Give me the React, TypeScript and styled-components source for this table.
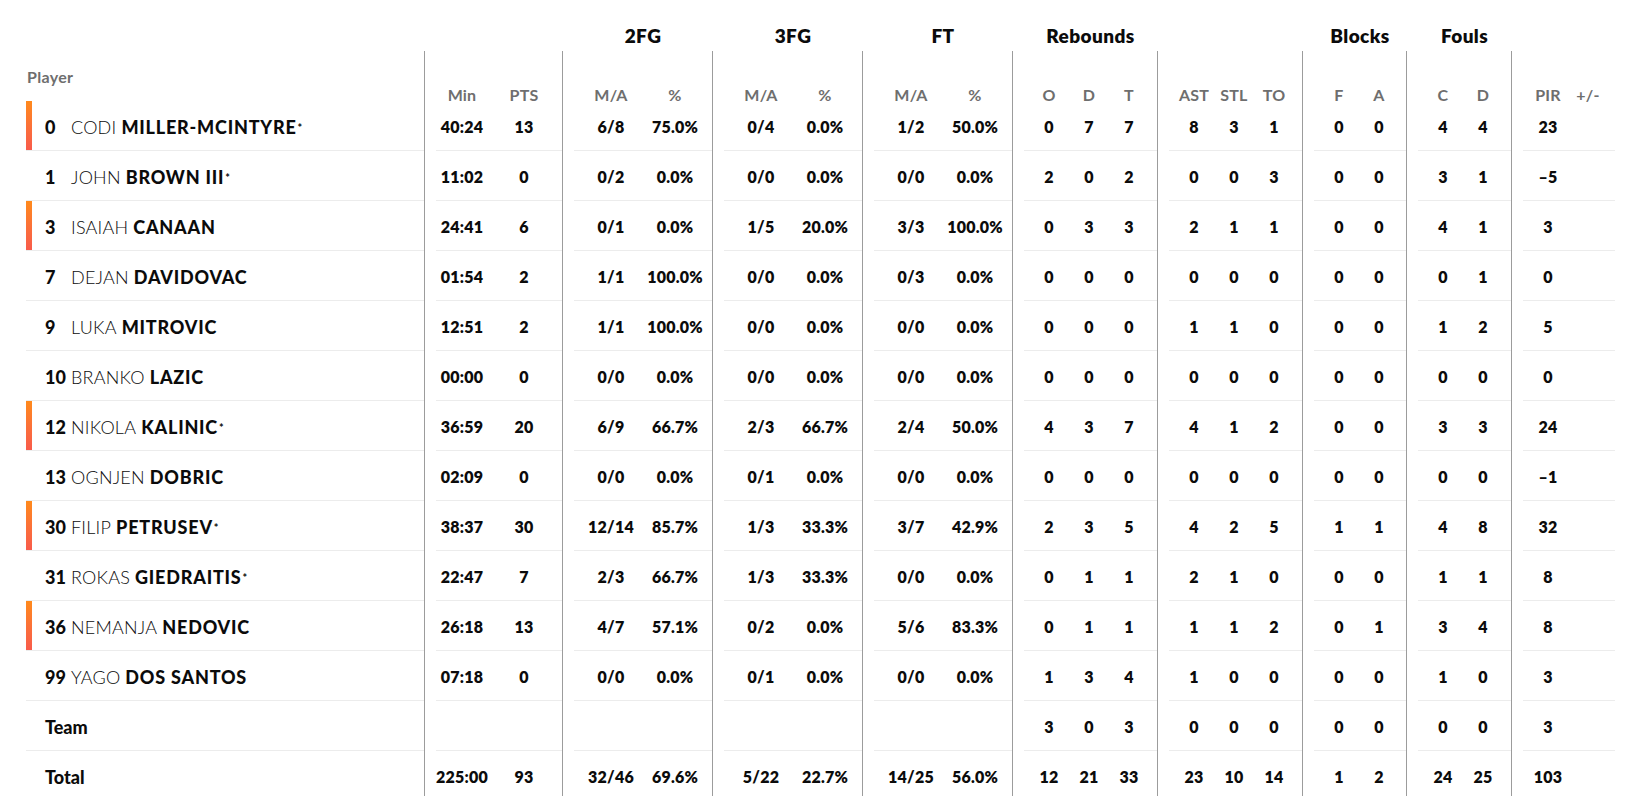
import React from 'react';
import styled, { createGlobalStyle } from 'styled-components';

const GlobalStyle = createGlobalStyle`
  html, body { margin: 0; padding: 0; background: #ffffff; }
  body {
    font-family: Lato, "Noto Sans", sans-serif;
    color: #111111;
    -webkit-font-smoothing: antialiased;
  }
`;

type GroupDef = {
  key: string;
  w: number;
  title: string;
  cols: number[];
  pad: number;
  heads: string[];
};

const GROUPS: GroupDef[] = [
  { key: 'mp', w: 138, title: '', cols: [52, 72], pad: 0, heads: ['Min', 'PTS'] },
  { key: 'fg2', w: 150, title: '2FG', cols: [74, 54], pad: 0, heads: ['M/A', '%'] },
  { key: 'fg3', w: 150, title: '3FG', cols: [74, 54], pad: 0, heads: ['M/A', '%'] },
  { key: 'ft', w: 150, title: 'FT', cols: [74, 54], pad: 0, heads: ['M/A', '%'] },
  { key: 'reb', w: 145, title: 'Rebounds', cols: [40, 40, 40], pad: 5, heads: ['O', 'D', 'T'] },
  { key: 'ast', w: 145, title: '', cols: [40, 40, 40], pad: 5, heads: ['AST', 'STL', 'TO'] },
  { key: 'blk', w: 104, title: 'Blocks', cols: [40, 40], pad: 5, heads: ['F', 'A'] },
  { key: 'fls', w: 105, title: 'Fouls', cols: [40, 40], pad: 5, heads: ['C', 'D'] },
  { key: 'pir', w: 104, title: '', cols: [40, 40], pad: 5, heads: ['PIR', '+/-'] },
];

type PlayerRow = {
  kind: 'player' | 'team' | 'total';
  no?: string;
  first?: string;
  last?: string;
  star?: boolean;
  bar?: boolean;
  label?: string;
  groups: string[][];
};

const p = (
  no: string,
  first: string,
  last: string,
  star: boolean,
  bar: boolean,
  s: string
): PlayerRow => {
  const v = s.split(' ');
  return {
    kind: 'player',
    no,
    first,
    last,
    star,
    bar,
    groups: [
      [v[0], v[1]],
      [v[2], v[3]],
      [v[4], v[5]],
      [v[6], v[7]],
      [v[8], v[9], v[10]],
      [v[11], v[12], v[13]],
      [v[14], v[15]],
      [v[16], v[17]],
      [v[18], ''],
    ],
  };
};

const ROWS: PlayerRow[] = [
  p('0', 'CODI', 'MILLER-MCINTYRE', true, true, '40:24 13 6/8 75.0% 0/4 0.0% 1/2 50.0% 0 7 7 8 3 1 0 0 4 4 23'),
  p('1', 'JOHN', 'BROWN III', true, false, '11:02 0 0/2 0.0% 0/0 0.0% 0/0 0.0% 2 0 2 0 0 3 0 0 3 1 –5'),
  p('3', 'ISAIAH', 'CANAAN', false, true, '24:41 6 0/1 0.0% 1/5 20.0% 3/3 100.0% 0 3 3 2 1 1 0 0 4 1 3'),
  p('7', 'DEJAN', 'DAVIDOVAC', false, false, '01:54 2 1/1 100.0% 0/0 0.0% 0/3 0.0% 0 0 0 0 0 0 0 0 0 1 0'),
  p('9', 'LUKA', 'MITROVIC', false, false, '12:51 2 1/1 100.0% 0/0 0.0% 0/0 0.0% 0 0 0 1 1 0 0 0 1 2 5'),
  p('10', 'BRANKO', 'LAZIC', false, false, '00:00 0 0/0 0.0% 0/0 0.0% 0/0 0.0% 0 0 0 0 0 0 0 0 0 0 0'),
  p('12', 'NIKOLA', 'KALINIC', true, true, '36:59 20 6/9 66.7% 2/3 66.7% 2/4 50.0% 4 3 7 4 1 2 0 0 3 3 24'),
  p('13', 'OGNJEN', 'DOBRIC', false, false, '02:09 0 0/0 0.0% 0/1 0.0% 0/0 0.0% 0 0 0 0 0 0 0 0 0 0 –1'),
  p('30', 'FILIP', 'PETRUSEV', true, true, '38:37 30 12/14 85.7% 1/3 33.3% 3/7 42.9% 2 3 5 4 2 5 1 1 4 8 32'),
  p('31', 'ROKAS', 'GIEDRAITIS', true, false, '22:47 7 2/3 66.7% 1/3 33.3% 0/0 0.0% 0 1 1 2 1 0 0 0 1 1 8'),
  p('36', 'NEMANJA', 'NEDOVIC', false, true, '26:18 13 4/7 57.1% 0/2 0.0% 5/6 83.3% 0 1 1 1 1 2 0 1 3 4 8'),
  p('99', 'YAGO', 'DOS SANTOS', false, false, '07:18 0 0/0 0.0% 0/1 0.0% 0/0 0.0% 1 3 4 1 0 0 0 0 1 0 3'),
  {
    kind: 'team',
    label: 'Team',
    groups: [
      ['', ''],
      ['', ''],
      ['', ''],
      ['', ''],
      ['3', '0', '3'],
      ['0', '0', '0'],
      ['0', '0'],
      ['0', '0'],
      ['3', ''],
    ],
  },
  {
    kind: 'total',
    label: 'Total',
    groups: [
      ['225:00', '93'],
      ['32/46', '69.6%'],
      ['5/22', '22.7%'],
      ['14/25', '56.0%'],
      ['12', '21', '33'],
      ['23', '10', '14'],
      ['1', '2'],
      ['24', '25'],
      ['103', ''],
    ],
  },
];

const PLAYER_W = 398;

const Table = styled.div`
  display: flex;
  flex-direction: column;
  padding-left: 26px;
  width: ${PLAYER_W + GROUPS.reduce((a, g) => a + g.w, 0)}px;
`;

const Row = styled.div<{ $h: number }>`
  display: flex;
  height: ${(props) => props.$h}px;
  flex: none;
`;

const TitleSpacer = styled.div`
  width: ${PLAYER_W}px;
  flex: none;
`;

const TitleCell = styled.div<{ $w: number }>`
  width: ${(props) => props.$w}px;
  flex: none;
  box-sizing: border-box;
  padding: 0 0 5px 12px;
  display: flex;
  align-items: flex-end;
  justify-content: center;
  font-size: 19px;
  line-height: 20px;
  letter-spacing: 0.4px;
  font-weight: 800;
  color: #0b0b0b;
`;

const PlayerHead = styled.div`
  width: ${PLAYER_W}px;
  flex: none;
  display: flex;
  align-items: center;
  padding-left: 1px;
  box-sizing: border-box;
  font-size: 16px;
  letter-spacing: 0.3px;
  font-weight: 700;
  color: #6e6e6e;
`;

const GroupCell = styled.div<{ $w: number }>`
  width: ${(props) => props.$w}px;
  flex: none;
  box-sizing: border-box;
  border-left: 1px solid #9c9c9c;
  padding-left: 11px;
  display: flex;
`;

const GroupInner = styled.div<{ $line: boolean; $pad: number }>`
  flex: 1;
  display: flex;
  padding-left: ${(props) => props.$pad}px;
  border-bottom: 1px solid ${(props) => (props.$line ? '#ececec' : 'transparent')};
`;

const Stat = styled.div<{ $w: number }>`
  width: ${(props) => props.$w}px;
  flex: none;
  display: flex;
  align-items: center;
  justify-content: center;
  padding-top: 2px;
  box-sizing: border-box;
  font-size: 16px;
  letter-spacing: 0.2px;
  font-weight: 800;
  color: #0b0b0b;
  white-space: nowrap;
`;

const SubHead = styled.div<{ $w: number }>`
  width: ${(props) => props.$w}px;
  flex: none;
  display: flex;
  justify-content: center;
  padding-top: 36px;
  box-sizing: border-box;
  font-size: 16px;
  line-height: 16px;
  letter-spacing: 0.2px;
  font-weight: 700;
  color: #6e6e6e;
  white-space: nowrap;
`;

const PlayerCell = styled.div<{ $line: boolean }>`
  width: ${PLAYER_W}px;
  flex: none;
  display: flex;
  align-items: stretch;
  box-sizing: border-box;
  border-bottom: 1px solid ${(props) => (props.$line ? '#ececec' : 'transparent')};
`;

const Bar = styled.div<{ $on: boolean }>`
  width: 6px;
  flex: none;
  margin-right: 13px;
  background: ${(props) =>
    props.$on ? 'linear-gradient(180deg, #ff8a1c 0%, #fb6f3a 55%, #f85b4b 100%)' : 'transparent'};
`;

const NameLine = styled.div`
  display: flex;
  align-items: center;
  padding-top: 2px;
  font-size: 18px;
  color: #0b0b0b;
  white-space: nowrap;
`;

const Num = styled.span`
  width: 26px;
  flex: none;
  font-weight: 900;
`;

const First = styled.span`
  font-weight: 300;
  letter-spacing: 0.2px;
  margin-right: 5px;
`;

const Last = styled.span`
  font-weight: 900;
  letter-spacing: 0.8px;
`;

const Star = styled.span`
  font-size: 11px;
  font-weight: 700;
  margin-left: 1px;
  position: relative;
  top: 1px;
`;

const Label = styled.span`
  font-weight: 900;
`;

const App: React.FC = () => (
  <>
    <GlobalStyle />
    <Table>
      <Row $h={51}>
        <TitleSpacer />
        {GROUPS.map((g) => (
          <TitleCell key={g.key} $w={g.w}>
            {g.title}
          </TitleCell>
        ))}
      </Row>
      <Row $h={50}>
        <PlayerHead>Player</PlayerHead>
        {GROUPS.map((g) => (
          <GroupCell key={g.key} $w={g.w}>
            <GroupInner $line={false} $pad={g.pad}>
              {g.heads.map((h, i) => (
                <SubHead key={h + i} $w={g.cols[i]}>
                  {h}
                </SubHead>
              ))}
            </GroupInner>
          </GroupCell>
        ))}
      </Row>
      {ROWS.map((r, ri) => {
        const line = r.kind !== 'total';
        return (
          <Row $h={50} key={ri}>
            <PlayerCell $line={line}>
              <Bar $on={!!r.bar} />
              <NameLine>
                {r.kind === 'player' ? (
                  <>
                    <Num>{r.no}</Num>
                    <First>{r.first}</First>
                    <Last>{r.last}</Last>
                    {r.star && <Star>*</Star>}
                  </>
                ) : (
                  <Label>{r.label}</Label>
                )}
              </NameLine>
            </PlayerCell>
            {GROUPS.map((g, gi) => (
              <GroupCell key={g.key} $w={g.w}>
                <GroupInner $line={line} $pad={g.pad}>
                  {g.cols.map((cw, ci) => (
                    <Stat key={ci} $w={cw}>
                      {r.groups[gi][ci]}
                    </Stat>
                  ))}
                </GroupInner>
              </GroupCell>
            ))}
          </Row>
        );
      })}
    </Table>
  </>
);

export default App;
